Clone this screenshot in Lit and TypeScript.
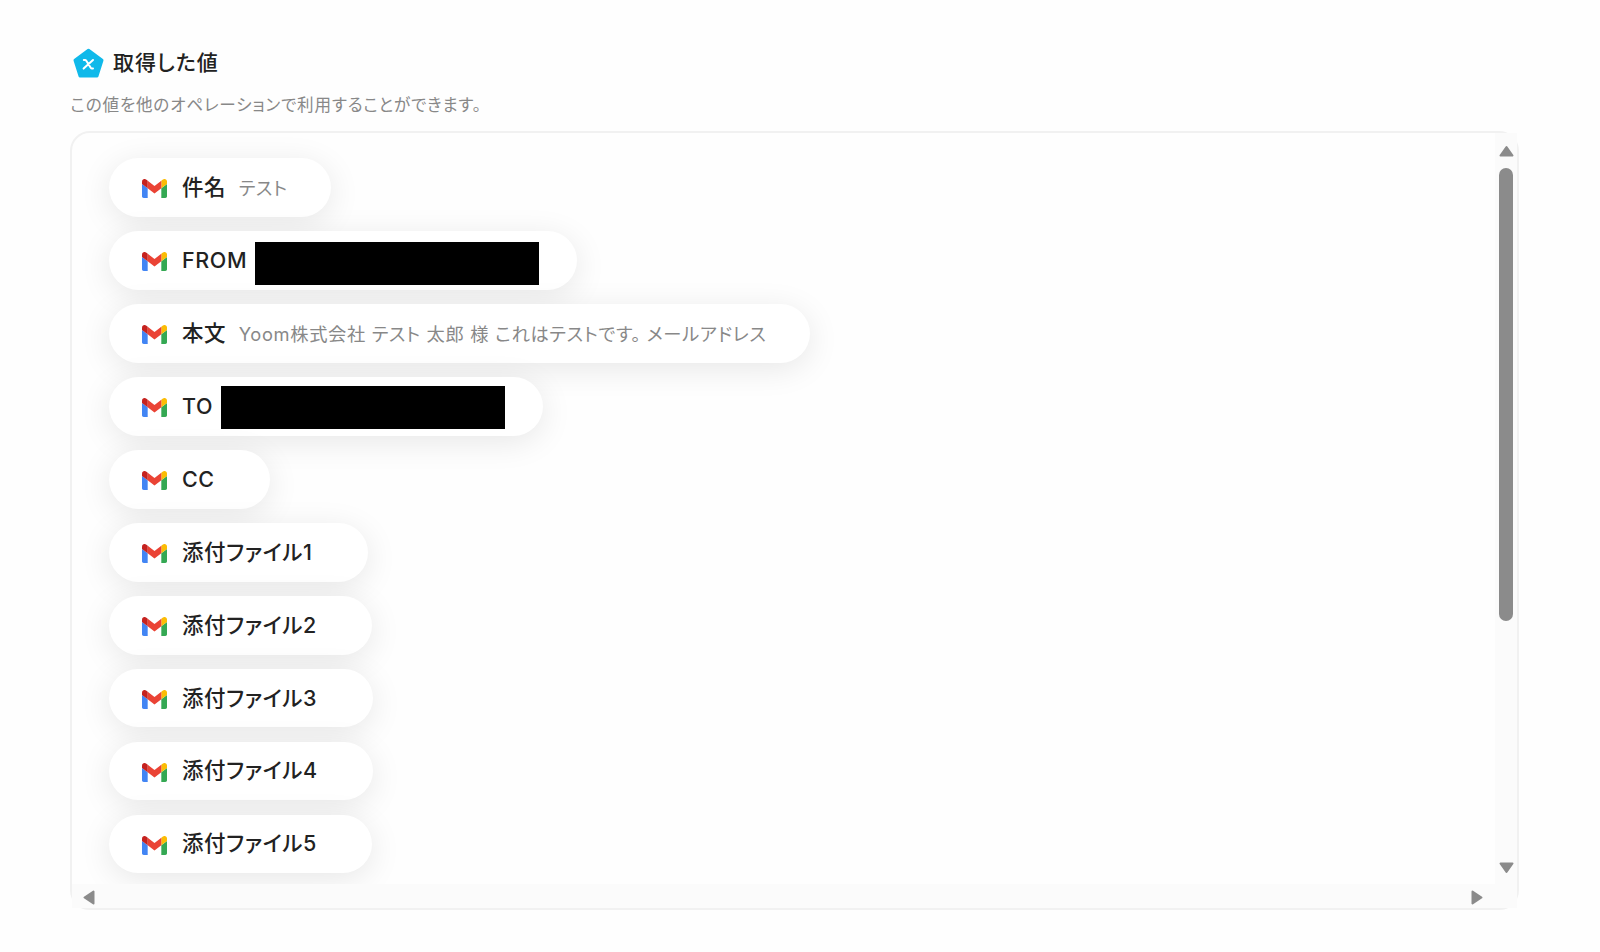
import { LitElement, css, html, nothing } from 'lit';
import { customElement, property } from 'lit/decorators.js';
import { styleMap } from 'lit/directives/style-map.js';

interface OutputItem {
  label: string;
  value?: string;
  masked?: boolean;
  maskShift?: number;
}

const ITEMS: OutputItem[] = [
  { label: '件名', value: 'テスト' },
  { label: 'FROM', masked: true, maskShift: 6 },
  { label: '本文', value: 'Yoom株式会社 テスト 太郎 様 これはテストです。 メールアドレス' },
  { label: 'TO', masked: true, maskShift: 2 },
  { label: 'CC' },
  { label: '添付ファイル1' },
  { label: '添付ファイル2' },
  { label: '添付ファイル3' },
  { label: '添付ファイル4' },
  { label: '添付ファイル5' },
];

@customElement('gmail-icon')
export class GmailIcon extends LitElement {
  static styles = css`
    :host {
      display: block;
      width: 25px;
      height: 19px;
    }

    svg {
      display: block;
    }
  `;

  render() {
    return html`
      <svg width="25" height="19" viewBox="52 42 88 66" preserveAspectRatio="none">
        <path fill="#4285f4" d="M58 108h14V74L52 59v43c0 3.32 2.69 6 6 6" />
        <path fill="#34a853" d="M120 108h14c3.32 0 6-2.69 6-6V59l-20 15" />
        <path fill="#fbbc04" d="M120 48v26l20-15v-8c0-7.42-8.47-11.65-14.4-7.2" />
        <path fill="#ea4335" d="M72 74V48l24 18 24-18v26L96 92" />
        <path fill="#c5221f" d="M52 51v8l20 15V48l-5.6-4.2c-5.94-4.45-14.4-.22-14.4 7.2" />
      </svg>
    `;
  }
}

@customElement('output-chip')
export class OutputChip extends LitElement {
  @property() label = '';
  @property() value = '';
  @property({ type: Boolean }) masked = false;
  @property({ type: Number }) maskShift = 0;

  static styles = css`
    :host {
      display: flex;
      align-items: baseline;
      box-sizing: border-box;
      width: max-content;
      height: 58.5px;
      padding: 0 43px 0 33px;
      border-radius: 30px;
      background-color: #fff;
      box-shadow: 0 6px 32px rgb(0 0 0 / 0.095);
    }

    /* Strut that keeps Latin and Japanese labels on one baseline */
    :host::before {
      content: '';
      width: 0;
      height: 36.6px;
    }

    :host([masked]) {
      padding-right: 37.5px;
    }

    gmail-icon {
      align-self: center;
      margin: 2px 15px 0 0;
    }

    .label {
      color: #222;
      font-size: 21.5px;
      font-weight: 500;
      letter-spacing: 0.6px;
      margin-right: 12.5px;
    }

    :host([masked]) .label {
      margin-right: 7.5px;
    }

    .value {
      color: #888;
      font-size: 18.3px;
      letter-spacing: 0.65px;
    }

    .mask {
      align-self: center;
      width: 284.5px;
      height: 43.5px;
      background-color: #000;
    }
  `;

  render() {
    return html`
      <gmail-icon></gmail-icon>
      <span class="label">${this.label}</span>
      ${this.value ? html`<span class="value">${this.value}</span>` : nothing}
      ${this.masked
        ? html`<span class="mask" style=${styleMap({ marginTop: `${this.maskShift}px` })}></span>`
        : nothing}
    `;
  }
}

@customElement('app-root')
export class AppRoot extends LitElement {
  static styles = css`
    :host {
      display: block;
      box-sizing: border-box;
      width: 1600px;
      height: 952px;
      padding: 48px 81px 0 70px;
      background-color: #fefefe;
      font-family: Inter, 'Noto Sans CJK JP', sans-serif;
      font-feature-settings: 'palt';
      white-space: nowrap;
      overflow: hidden;
    }

    .header {
      display: flex;
      align-items: center;
      height: 31px;
      padding-left: 3px;
    }

    .header svg {
      margin-right: 9px;
    }

    h1 {
      margin: -2px 0 0;
      color: #222;
      font-size: 21px;
      font-weight: 500;
      letter-spacing: 1px;
      line-height: 30px;
    }

    .description {
      margin: 14px 0 0 0.5px;
      color: #888;
      font-size: 16.6px;
      line-height: 24.5px;
      letter-spacing: 0.8px;
    }

    .panel {
      display: grid;
      grid-template-columns: 1fr 22px;
      grid-template-rows: 1fr 24px;
      box-sizing: border-box;
      height: 779px;
      margin-top: 13.5px;
      border: 2px solid #f1f1f1;
      border-radius: 20px;
    }

    .list {
      display: flex;
      flex-direction: column;
      gap: 14.45px;
      padding: 25.4px 0 0 37px;
      min-height: 0;
      overflow: hidden;
      border-radius: 18px 0 0 0;
    }

    output-chip {
      flex: none;
    }

    .track {
      display: flex;
      align-items: center;
      background-color: #fbfbfb;
    }

    .track svg {
      display: block;
      fill: #8b8b8b;
      stroke: #8b8b8b;
      stroke-width: 2;
      stroke-linejoin: round;
    }

    .vertical {
      flex-direction: column;
      padding: 12px 0 10px;
    }

    .thumb {
      width: 14px;
      height: 453px;
      margin: 11px 0 auto;
      border-radius: 7px;
      background-color: #8b8b8b;
    }

    .horizontal {
      justify-content: space-between;
      padding: 3px 12px 0 11px;
    }

    .corner {
      background-color: #fbfbfb;
    }
  `;

  render() {
    return html`
      <div class="header">
        <svg width="31" height="31" viewBox="0 0 31 31">
          <path
            d="M15.5 2.2 29 12.3 24 28H7L2 12.3Z"
            fill="#10b9ea"
            stroke="#10b9ea"
            stroke-width="3"
            stroke-linejoin="round"
          />
          <path
            d="M10.800 12h1.200q.8 0 1.300.8l4.400 7q.5.800 1.300.8h1M20 12 10.600 20.600"
            fill="none"
            stroke="#fff"
            stroke-width="2"
            stroke-linecap="round"
          />
        </svg>
        <h1>取得した値</h1>
      </div>
      <p class="description">この値を他のオペレーションで利用することができます。</p>
      <div class="panel">
        <div class="list">
          ${ITEMS.map(
            (item) => html`
              <output-chip
                .label=${item.label}
                .value=${item.value ?? ''}
                .maskShift=${item.maskShift ?? 0}
                ?masked=${item.masked}
              ></output-chip>
            `
          )}
        </div>
        <div class="track vertical">
          <svg width="15" height="12" viewBox="0 0 15 12">
            <path d="M7.500 2 13.500 10.500h-12Z" />
          </svg>
          <div class="thumb"></div>
          <svg width="15" height="12" viewBox="0 0 15 12">
            <path d="M1.500 1.500h12L7.500 10Z" />
          </svg>
        </div>
        <div class="track horizontal">
          <svg width="12" height="15" viewBox="0 0 12 15">
            <path d="M1.500 7.500 10.500 1.500v12Z" />
          </svg>
          <svg width="12" height="15" viewBox="0 0 12 15">
            <path d="M1.500 1.500 10.500 7.500 1.500 13.500Z" />
          </svg>
        </div>
        <div class="corner"></div>
      </div>
    `;
  }
}
